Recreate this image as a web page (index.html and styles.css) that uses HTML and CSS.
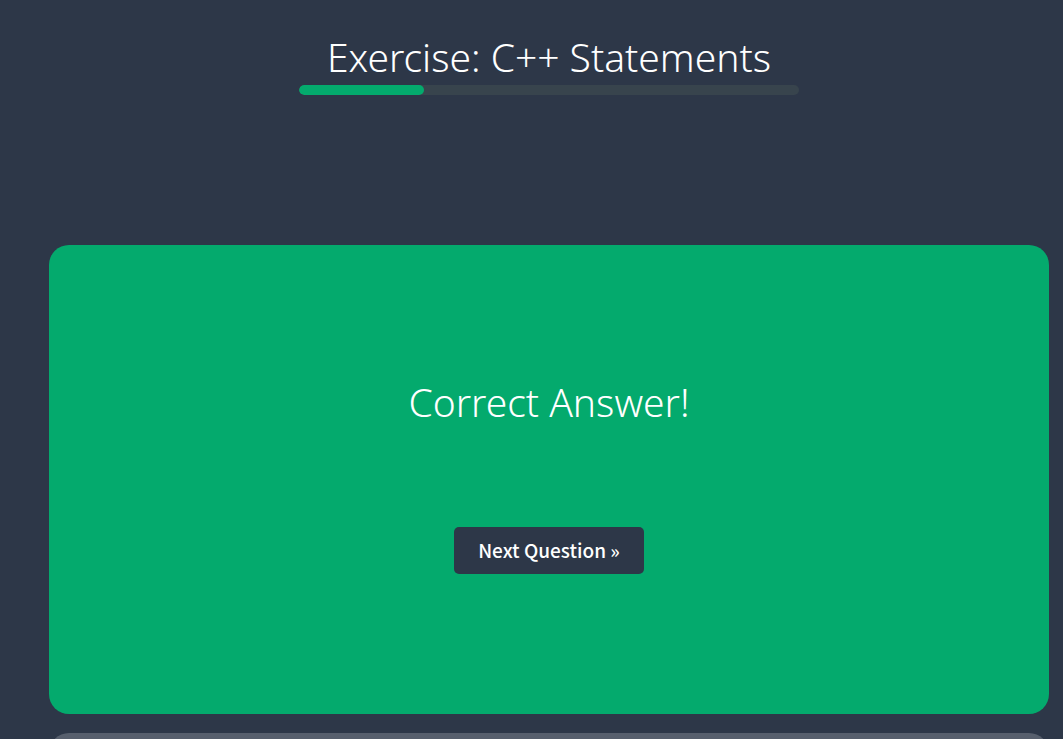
FILE: index.html
```html
<!DOCTYPE html>
<html lang="en">
<head>
<meta charset="utf-8">
<title>Exercise: C++ Statements</title>
<link rel="stylesheet" href="styles.css">
</head>
<body>
<main class="page">
  <header class="header">
    <h1 class="title">Exercise: C++ Statements</h1>
    <div class="progress" role="progressbar" aria-label="Exercise progress" aria-valuenow="25" aria-valuemin="0" aria-valuemax="100">
      <div class="progress-fill" style="width: 25%"></div>
    </div>
  </header>
  <section class="result">
    <h2 class="message">Correct Answer!</h2>
    <button class="next" type="button">Next Question »</button>
  </section>
  <section class="panel"></section>
</main>
</body>
</html>
```
FILE: styles.css
```css
* {
  box-sizing: border-box;
}

body {
  margin: 0;
  background: #2d3748;
  color: #fff;
  font-family: "Segoe UI", "Noto Sans", "Open Sans", sans-serif;
}

.page {
  height: 100vh;
  padding: 30px 14px 0 49px;
  overflow: hidden;
}

.header {
  display: flex;
  flex-direction: column;
  align-items: center;
}

.title,
.message {
  margin: 0;
  padding-bottom: 2px;
  font-size: 39px;
  line-height: 53px;
  font-weight: 300;
  text-align: center;
}

.progress {
  width: 100%;
  max-width: 500px;
  height: 10px;
  border-radius: 5px;
  background: #38444d;
  overflow: hidden;
}

.progress-fill {
  height: 100%;
  border-radius: 5px;
  background: #04aa6d;
}

.result {
  display: flex;
  flex-direction: column;
  align-items: center;
  gap: 97px;
  margin-top: 150px;
  padding: 130px 24px 140px;
  border-radius: 20px;
  background: #04aa6d;
}

.next {
  padding: 9px 24px 11px;
  border: 0;
  border-radius: 5px;
  background: #2d3748;
  color: #fff;
  font-family: "Source Sans Pro", "Noto Sans CJK SC", sans-serif;
  font-size: 19px;
  line-height: 27px;
  font-weight: 500;
}

.panel {
  height: 400px;
  margin-top: 19px;
  border-radius: 20px;
  background: #575f6d;
}
```
